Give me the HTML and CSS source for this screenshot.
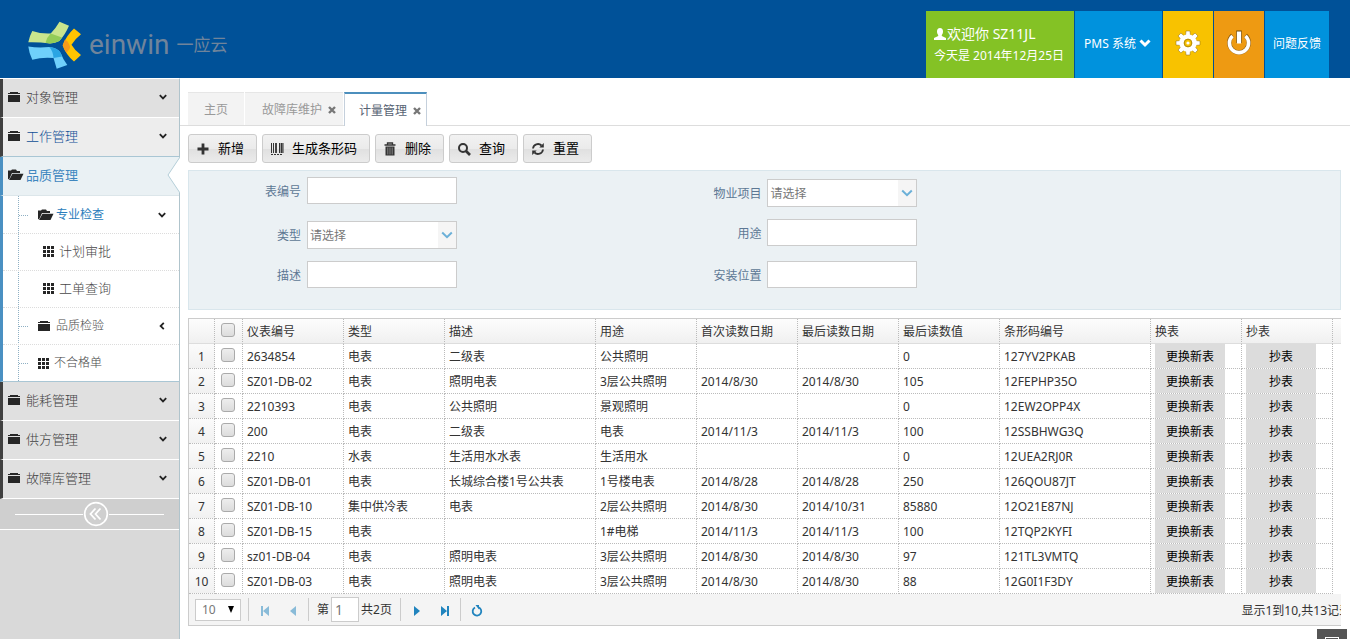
FILE: index.html
```html
<!DOCTYPE html>
<html lang="zh-CN">
<head>
<meta charset="utf-8">
<title>计量管理</title>
<link rel="stylesheet" href="styles.css">
</head>
<body>
<svg class="defs" width="0" height="0" aria-hidden="true">
  <symbol id="folder" viewBox="0 0 14 12"><path d="M0 3V2H2V1H10V2H12V3ZM0 4H12V11H0Z"/></symbol>
  <symbol id="folder-open" viewBox="0 0 16 12"><path d="M0 10.500V1.500H3L4 .5H8L9 2H12V4H4L1.500 9.500ZM4.500 4.700H15.500L12.500 11H1Z"/></symbol>
  <symbol id="grid" viewBox="0 0 11 11"><path d="M0 0H3V3H0ZM4 0H7V3H4ZM8 0H11V3H8ZM0 4H3V7H0ZM4 4H7V7H4ZM8 4H11V7H8ZM0 8H3V11H0ZM4 8H7V11H4ZM8 8H11V11H8Z"/></symbol>
  <symbol id="down" viewBox="0 0 8 6"><path d="M.8 1.200L4 4.400L7.200 1.200" fill="none" stroke="currentColor" stroke-width="1.800"/></symbol>
  <symbol id="close" viewBox="0 0 8 8"><path d="M1 1L7 7M7 1L1 7" fill="none" stroke="currentColor" stroke-width="2.400"/></symbol>
  <symbol id="chevron" viewBox="0 0 12 8"><path d="M1.200 1.500L6 6.200L10.800 1.500" fill="none" stroke="currentColor" stroke-width="2"/></symbol>
</svg>

<header class="header">
  <a class="logo" href="#">
    <svg width="54" height="48" viewBox="0 0 54 48" aria-hidden="true">
      <path d="M4.300 10Q13 13 22.700 12.500Q28 7 31.500 .8L41 4.700Q37 14 31.300 20Q27 22 22 22.500Q11 21 .3 21.300Q1.500 15 4.300 10Z" fill="#c9e58d"/>
      <path d="M22.700 12.500L34 16.500L31.300 20Q27 22 22 22.500L17.500 21.700Q19 16 22.700 12.500Z" fill="#93cc58"/>
      <path d="M.3 25.500Q10 27 21.300 26Q30 27 32.700 32Q35 38.500 39.300 44L28.700 47.700Q27 42 25.500 37Q14 36 4.300 38.700Q1 32 .3 25.500Z" fill="#6fd0fb"/>
      <path d="M21.300 26Q30 27 32.700 32L34 35.500L25.500 37Q25 30 21.300 26Z" fill="#2aa5e3"/>
      <path d="M46 7.500L53 13.300Q47 18 43.500 23.800Q47 30 53 34L46 40.500Q38 34 34.700 24.300Q38 15 46 7.500Z" fill="#ffc400"/>
      <path d="M37 18.500Q42 22 42 27L38.500 32Q35.500 28 34.700 24.300Z" fill="#f59a1c"/>
    </svg>
    <span class="logo-name">einwin</span><span class="logo-sub">一应云</span>
  </a>
  <div class="tiles">
    <div class="tile tile-user">
      <div class="hello"><svg width="12" height="12" viewBox="0 0 12 12" aria-hidden="true"><path d="M6 0C8 0 9 1.500 9 3.500C9 5 8.500 6 7.800 7V8L12 10V12H0V10L4.200 8V7C3.500 6 3 5 3 3.500C3 1.500 4 0 6 0Z" fill="#fff"/></svg>欢迎你 SZ11JL</div>
      <div>今天是 2014年12月25日</div>
    </div>
    <button class="tile tile-blue tile-pms" type="button">PMS 系统 <svg width="12" height="9" viewBox="0 0 12 9" aria-hidden="true"><path d="M1.500 1.500L6 6L10.500 1.500" fill="none" stroke="#fff" stroke-width="3"/></svg></button>
    <button class="tile tile-gear" type="button" aria-label="设置">
      <svg width="26" height="26" viewBox="-13 -13 26 26" aria-hidden="true">
        <g fill="#fff" stroke="#8a6a10" stroke-width=".5"><path id="tooth" d="M-2.600-6L-2-12H2L2.600-6ZM-2.600 6L-2 12H2L2.600 6Z"/><use href="#tooth" transform="rotate(45)"/><use href="#tooth" transform="rotate(90)"/><use href="#tooth" transform="rotate(135)"/></g>
        <circle r="6.500" fill="none" stroke="#fff" stroke-width="4.500"/><circle r="3.800" fill="#f8c200" stroke="#b08a10" stroke-width="1"/><circle r="1.600" fill="#fff"/>
      </svg>
    </button>
    <button class="tile tile-power" type="button" aria-label="退出">
      <svg width="26" height="26" viewBox="-13 -13 26 26" aria-hidden="true"><g fill="none"><path d="M-6.500-7.500A9.700 9.700 0 1 0 6.500-7.500" stroke="#8a5a10" stroke-width="4.400"/><path d="M-6.500-7A9.600 9.600 0 1 0 6.500-7" stroke="#fff" stroke-width="3.600"/><path d="M0-12.500V0" stroke="#6b4a10" stroke-width="5.400"/><path d="M0-11.500V.5" stroke="#fff" stroke-width="4.200"/></g></svg>
    </button>
    <a class="tile tile-blue tile-feedback" href="#">问题反馈</a>
  </div>
</header>

<div class="body">
  <nav class="sidebar">
    <a class="item" href="#"><svg class="ic-folder"><use href="#folder"/></svg>对象管理<svg class="arrow"><use href="#down"/></svg></a>
    <a class="item item-hover" href="#"><svg class="ic-folder"><use href="#folder"/></svg>工作管理<svg class="arrow"><use href="#down"/></svg></a>
    <a class="item item-active" href="#"><svg class="ic-open"><use href="#folder-open"/></svg>品质管理
      <svg class="notch" width="13" height="36" viewBox="0 0 13 36"><path d="M13 0L1 18L13 36" fill="#fff" stroke="#b4ced8"/></svg></a>
    <div class="submenu">
      <a class="sub sub-open branch" href="#"><svg class="ic-open"><use href="#folder-open"/></svg>专业检查<svg class="arrow"><use href="#down"/></svg></a>
      <a class="sub leaf" href="#"><svg class="ic-grid"><use href="#grid"/></svg>计划审批</a>
      <a class="sub leaf" href="#"><svg class="ic-grid"><use href="#grid"/></svg>工单查询</a>
      <a class="sub branch" href="#"><svg class="ic-folder"><use href="#folder"/></svg>品质检验<svg class="arrow arrow-left"><use href="#down"/></svg></a>
      <a class="sub branch" href="#"><svg class="ic-grid"><use href="#grid"/></svg>不合格单</a>
    </div>
    <a class="item" href="#"><svg class="ic-folder"><use href="#folder"/></svg>能耗管理<svg class="arrow"><use href="#down"/></svg></a>
    <a class="item" href="#"><svg class="ic-folder"><use href="#folder"/></svg>供方管理<svg class="arrow"><use href="#down"/></svg></a>
    <a class="item" href="#"><svg class="ic-folder"><use href="#folder"/></svg>故障库管理<svg class="arrow"><use href="#down"/></svg></a>
    <div class="collapse">
      <button type="button" aria-label="收起"><svg width="26" height="26" viewBox="0 0 26 26"><circle cx="13" cy="13" r="11.300" fill="none" stroke="#fff" stroke-width="1.700"/><path d="M12.500 7.500L7.500 13L12.500 18.500M17.500 7.500L12.500 13L17.500 18.500" fill="none" stroke="#fff" stroke-width="1.800"/></svg></button>
    </div>
  </nav>

  <main class="main">
    <div class="tabs">
      <a class="tab" href="#">主页</a>
      <a class="tab" href="#">故障库维护<svg class="x"><use href="#close"/></svg></a>
      <a class="tab tab-active" href="#">计量管理<svg class="x"><use href="#close"/></svg></a>
    </div>

    <div class="content">
      <div class="toolbar">
        <button type="button"><svg width="14" height="14" viewBox="0 0 14 14"><path d="M7 1.500V12.500M1.500 7H12.500" stroke="#333" stroke-width="2.800"/></svg>新增</button>
        <button type="button"><svg width="14" height="14" viewBox="0 0 14 14"><path d="M1.500 1V11M3.500 1V11M9.500 1V11M13 1V11" stroke="#333" stroke-width="1"/><path d="M6 1V11M11.500 1V11" stroke="#333" stroke-width="1.800"/><path d="M1 12.500H13" stroke="#333" stroke-dasharray="2 1"/></svg>生成条形码</button>
        <button type="button"><svg width="14" height="14" viewBox="0 0 14 14"><path d="M4.500 2.500V1H9.500V2.500M1.500 3H12.500" fill="none" stroke="#333" stroke-width="1.300"/><path d="M2.500 4.500H11.500V13.500H2.500Z" fill="#333"/><path d="M4.800 5.500V12.500M7 5.500V12.500M9.200 5.500V12.500" stroke="#999" stroke-width=".8"/></svg>删除</button>
        <button type="button"><svg width="14" height="14" viewBox="0 0 14 14"><circle cx="6" cy="6" r="4" fill="none" stroke="#333" stroke-width="2"/><path d="M9 9L13 13" stroke="#333" stroke-width="2.600"/></svg>查询</button>
        <button type="button"><svg width="14" height="14" viewBox="0 0 14 14"><path d="M2 6.500A5 5 0 0 1 10.500 3.500M12 7.500A5 5 0 0 1 3.500 10.500" fill="none" stroke="#333" stroke-width="1.800"/><path d="M12.800 1V5.500H8.300ZM1.200 13V8.500H5.700Z" fill="#333"/></svg>重置</button>
      </div>

      <form class="filters">
        <div class="filter-col">
          <div class="field"><label for="f1">表编号</label><input id="f1" type="text"></div>
          <div class="field"><label for="f2">类型</label><span class="combo"><select id="f2"><option>请选择</option></select><svg><use href="#chevron"/></svg></span></div>
          <div class="field"><label for="f3">描述</label><input id="f3" type="text"></div>
        </div>
        <div class="filter-col filter-col-right">
          <div class="field"><label for="f4">物业项目</label><span class="combo"><select id="f4"><option>请选择</option></select><svg><use href="#chevron"/></svg></span></div>
          <div class="field"><label for="f5">用途</label><input id="f5" type="text"></div>
          <div class="field"><label for="f6">安装位置</label><input id="f6" type="text"></div>
        </div>
      </form>

      <div class="grid">
        <table>
          <colgroup><col class="c-no"><col class="c-check"><col class="c-m"><col class="c-m"><col class="c-l"><col class="c-m"><col class="c-m"><col class="c-m"><col class="c-m"><col class="c-l"><col class="c-act"><col class="c-act"><col></colgroup>
          <thead><tr><th></th><th><input type="checkbox" aria-label="全选"></th><th>仪表编号</th><th>类型</th><th>描述</th><th>用途</th><th>首次读数日期</th><th>最后读数日期</th><th>最后读数值</th><th>条形码编号</th><th>换表</th><th>抄表</th><th></th></tr></thead>
          <tbody>
            <tr><td>1</td><td><input type="checkbox" aria-label="选择 1"></td><td>2634854</td><td>电表</td><td>二级表</td><td>公共照明</td><td></td><td></td><td>0</td><td>127YV2PKAB</td><td><button type="button">更换新表</button></td><td><button type="button">抄表</button></td><td></td></tr>
            <tr><td>2</td><td><input type="checkbox" aria-label="选择 2"></td><td>SZ01-DB-02</td><td>电表</td><td>照明电表</td><td>3层公共照明</td><td>2014/8/30</td><td>2014/8/30</td><td>105</td><td>12FEPHP35O</td><td><button type="button">更换新表</button></td><td><button type="button">抄表</button></td><td></td></tr>
            <tr><td>3</td><td><input type="checkbox" aria-label="选择 3"></td><td>2210393</td><td>电表</td><td>公共照明</td><td>景观照明</td><td></td><td></td><td>0</td><td>12EW2OPP4X</td><td><button type="button">更换新表</button></td><td><button type="button">抄表</button></td><td></td></tr>
            <tr><td>4</td><td><input type="checkbox" aria-label="选择 4"></td><td>200</td><td>电表</td><td>二级表</td><td>电表</td><td>2014/11/3</td><td>2014/11/3</td><td>100</td><td>12SSBHWG3Q</td><td><button type="button">更换新表</button></td><td><button type="button">抄表</button></td><td></td></tr>
            <tr><td>5</td><td><input type="checkbox" aria-label="选择 5"></td><td>2210</td><td>水表</td><td>生活用水水表</td><td>生活用水</td><td></td><td></td><td>0</td><td>12UEA2RJ0R</td><td><button type="button">更换新表</button></td><td><button type="button">抄表</button></td><td></td></tr>
            <tr><td>6</td><td><input type="checkbox" aria-label="选择 6"></td><td>SZ01-DB-01</td><td>电表</td><td>长城综合楼1号公共表</td><td>1号楼电表</td><td>2014/8/28</td><td>2014/8/28</td><td>250</td><td>126QOU87JT</td><td><button type="button">更换新表</button></td><td><button type="button">抄表</button></td><td></td></tr>
            <tr><td>7</td><td><input type="checkbox" aria-label="选择 7"></td><td>SZ01-DB-10</td><td>集中供冷表</td><td>电表</td><td>2层公共照明</td><td>2014/8/30</td><td>2014/10/31</td><td>85880</td><td>12O21E87NJ</td><td><button type="button">更换新表</button></td><td><button type="button">抄表</button></td><td></td></tr>
            <tr><td>8</td><td><input type="checkbox" aria-label="选择 8"></td><td>SZ01-DB-15</td><td>电表</td><td></td><td>1#电梯</td><td>2014/11/3</td><td>2014/11/3</td><td>100</td><td>12TQP2KYFI</td><td><button type="button">更换新表</button></td><td><button type="button">抄表</button></td><td></td></tr>
            <tr><td>9</td><td><input type="checkbox" aria-label="选择 9"></td><td>sz01-DB-04</td><td>电表</td><td>照明电表</td><td>3层公共照明</td><td>2014/8/30</td><td>2014/8/30</td><td>97</td><td>121TL3VMTQ</td><td><button type="button">更换新表</button></td><td><button type="button">抄表</button></td><td></td></tr>
            <tr><td>10</td><td><input type="checkbox" aria-label="选择 10"></td><td>SZ01-DB-03</td><td>电表</td><td>照明电表</td><td>3层公共照明</td><td>2014/8/30</td><td>2014/8/30</td><td>88</td><td>12G0I1F3DY</td><td><button type="button">更换新表</button></td><td><button type="button">抄表</button></td><td></td></tr>
          </tbody>
        </table>
        <div class="pager">
          <span class="page-size"><select aria-label="每页条数"><option>10</option></select><svg width="8" height="8" viewBox="0 0 8 8"><path d="M1 0H7L4 7Z"/></svg></span>
          <i class="sep"></i>
          <button class="off" type="button" aria-label="首页"><svg width="10" height="10" viewBox="0 0 10 10"><path d="M1 0H3V10H1ZM9 0V10L3 5Z"/></svg></button>
          <button class="off" type="button" aria-label="上一页"><svg width="10" height="10" viewBox="0 0 10 10"><path d="M8 0V10L2 5Z"/></svg></button>
          <i class="sep"></i>
          <label class="page-no">第<input type="text" value="1">共2页</label>
          <i class="sep"></i>
          <button type="button" aria-label="下一页"><svg width="10" height="10" viewBox="0 0 10 10"><path d="M2 0V10L8 5Z"/></svg></button>
          <button type="button" aria-label="末页"><svg width="10" height="10" viewBox="0 0 10 10"><path d="M7 0H9V10H7ZM1 0V10L7 5Z"/></svg></button>
          <i class="sep"></i>
          <button type="button" aria-label="刷新"><svg width="12" height="12" viewBox="0 0 12 12"><path d="M7.500 2.300A4.300 4.300 0 1 1 4 2.500" fill="none" stroke="#2184be" stroke-width="1.800"/><path d="M4.500 0H8V4.500Z"/></svg></button>
          <span class="info">显示1到10,共13记录</span>
        </div>
      </div>
    </div>
  </main>
</div>
<button class="corner" type="button" aria-label="窗口"><svg width="14" height="10" viewBox="0 0 14 10"><rect x=".5" y=".5" width="13" height="9" fill="none" stroke="#fff"/></svg></button>
</body>
</html>
```
FILE: styles.css
```css
* { box-sizing: border-box; }
body {
  margin: 0;
  min-height: 100vh;
  display: flex;
  flex-direction: column;
  overflow: hidden;
  background: #fff;
  color: #333;
  font: 12px/18px "Noto Sans", "Noto Sans CJK SC", sans-serif;
}
a { color: inherit; text-decoration: none; }
button, input, select { font: inherit; color: inherit; margin: 0; border-radius: 0; }
button { cursor: pointer; }
.defs { position: absolute; }

/* header */
.header {
  display: flex;
  justify-content: space-between;
  align-items: flex-end;
  height: 78px;
  padding: 0 21px 0 28px;
  background: #005198;
}
.logo { display: flex; align-items: center; align-self: center; height: 68px; padding-top: 11px; color: #70849b; }
.logo-name { margin: 0 7px 0 7px; font: 28px/32px Roboto, sans-serif; }
.logo-sub { font-size: 17px; line-height: 24px; }
.tiles { display: flex; gap: 1px; height: 67px; color: #fff; }
.tile { display: flex; align-items: center; justify-content: center; padding: 0; border: 0; color: #fff; }
.tile-user { flex-direction: column; align-items: flex-start; width: 148px; padding: 0 8px; gap: 3px; background: #84c225; white-space: nowrap; }
.hello { display: flex; align-items: center; gap: 1px; font-size: 14px; line-height: 20px; }
.tile-blue { padding-bottom: 2px; background: #0092dd; }
.tile-pms { width: 87px; gap: 3px; padding-right: 2px; }
.tile-gear { width: 50px; background: #f8c200; }
.tile-power { width: 50px; background: #ee9a12; }
.tile-feedback { width: 64px; }
.tile-gear svg, .tile-power svg { margin-bottom: 4px; }

/* sidebar */
.body { display: flex; flex: 1; }
.sidebar { flex: 0 0 180px; border-top: 1px solid #fff; border-right: 1px solid #b0c4cc; background: #d9d9d9; color: #404040; }
.item {
  position: relative;
  display: flex;
  align-items: center;
  height: 39px;
  padding: 0 12px 2px 5px;
  border-left: 3px solid #404040;
  border-bottom: 1px solid #fff;
  background: #e0e0e0;
  font-size: 13px;
  font-weight: 300;
}
.item-hover { background: #ededed; color: #0f4f96; border-bottom-color: #a9c6d4; }
.item-active { background: #eaf1f4; color: #3f87bf; border-left-color: #4a90c2; border-bottom-color: #dce6ea; font-weight: 400; }
.ic-folder { width: 14px; height: 12px; margin-right: 4px; fill: #262626; }
.ic-open { width: 16px; height: 12px; margin-right: 2px; fill: #262626; }
.ic-grid { width: 11px; height: 11px; margin-right: 5px; fill: #262626; }
.arrow { width: 8px; height: 6px; margin-left: auto; color: #222; }
.arrow-left { transform: rotate(90deg); }
.notch { position: absolute; right: -1px; top: 0; }
.submenu { position: relative; padding-top: 1px; border-left: 3px solid #4a90c2; border-bottom: 1px solid #a9c6d4; background: #fff; color: #484848; }
.submenu::before { content: ""; position: absolute; left: 15px; top: 0; bottom: 0; border-left: 1px dotted #8fb0c4; }
.sub { position: relative; display: flex; align-items: center; height: 37px; padding: 0 13px 0 35px; border-bottom: 1px dotted #dcdcdc; font-weight: 300; }
.sub:last-child { height: 36px; border-bottom: 0; }
.sub.leaf { padding-left: 40px; padding-bottom: 2px; font-size: 13px; }
.sub-open { color: #2b7dbc; font-weight: 400; }
.branch::before { content: ""; position: absolute; left: 16px; top: 18px; width: 9px; border-top: 1px dotted #8fb0c4; }
.collapse { display: flex; justify-content: center; align-items: center; height: 31px; padding: 0 15px; border-bottom: 1px solid #fff; background: #cfcfcf; }
.collapse::before, .collapse::after { content: ""; border-top: 1px solid #fff; }
.collapse::before { flex: 5; }
.collapse::after { flex: 4; }
.collapse button { display: flex; padding: 0; border: 0; background: none; }

/* tabs */
.main { flex: 1; min-width: 0; padding-top: 14px; }
.tabs { display: flex; gap: 1px; height: 34px; padding-left: 8px; border-bottom: 1px solid #ddd; color: #999; }
.tab { display: flex; align-items: center; gap: 6px; padding: 2px 7px 0 17px; border-top: 1px solid #e6e6e6; background: #f3f3f3; }
.tab:first-child { padding: 2px 16px 0; }
.tab-active { height: 34px; padding: 1px 5px 0 14px; border: 1px solid #c5d0dc; border-top: 2px solid #4c8fbd; border-bottom: 0; background: #fff; color: #576373; }
.x { width: 8px; height: 8px; color: #777; }

/* toolbar */
.content { padding: 8px 9px 0 8px; }
.toolbar { display: flex; gap: 5px; margin-bottom: 7px; }
.toolbar button { display: flex; align-items: center; gap: 8px; height: 29px; padding: 0 12px 2px 7px; border: 1px solid #ccc; border-radius: 3px; background: linear-gradient(#f2f2f2, #ebebeb 50%, #e0e0e0 52%, #ebebeb); color: #000; font-size: 13px; }
.toolbar svg { margin-top: 2px; }

/* filters */
.filters { display: flex; height: 140px; margin-bottom: 8px; border: 1px solid #d9e6ec; background: #ebf1f4; color: #5d7894; }
.filter-col { flex: 0 0 40%; padding-top: 6px; }
.filter-col-right { padding-top: 8px; }
.field { display: flex; align-items: center; gap: 6px; margin-bottom: 12px; }
.filter-col:first-child .field:first-child { margin-bottom: 17px; }
.filter-col-right .field:nth-child(2) { margin-bottom: 15px; }
.field label { width: 112px; padding-top: 2px; text-align: right; }
.field input, .field select { width: 150px; height: 27px; padding: 0 2px; border: 1px solid #ccc; background: #fff; color: #777; outline: 0; appearance: none; }
.combo { position: relative; display: flex; }
.field select { height: 28px; padding-top: 2px; }
.combo svg { position: absolute; right: 1px; top: 1px; width: 18px; height: 26px; padding: 9px 3px; background: #f5f5f5; color: #6bb0d8; pointer-events: none; }

/* data grid */
.grid { overflow: hidden; border: solid #ccc; border-width: 1px 0 1px 1px; }
table { width: 100%; table-layout: fixed; border-collapse: separate; border-spacing: 0; }
.c-no { width: 26px; }
.c-check { width: 28px; }
.c-m { width: 101px; }
.c-l { width: 151px; }
.c-act { width: 91px; }
th, td { height: 25px; padding: 2px 4px 0; border-right: 1px dotted #bbb; border-bottom: 1px dotted #bbb; font-weight: 400; text-align: left; white-space: nowrap; line-height: 18px; }
th { border-bottom: 1px solid #ddd; background: linear-gradient(#fdfdfd, #f0f0f0); }
th:last-child, td:last-child { border-right: 0; }
td:last-child { border-bottom: 0; }
td:first-child { padding: 2px 0 0; background: linear-gradient(#fbfbfb, #f1f1f1); text-align: center; }
th:nth-child(2), td:nth-child(2) { padding: 0 1px 0 0; text-align: center; }
td:nth-child(11), td:nth-child(12) { padding: 0 4px; }
td button { display: block; width: 70px; height: 24px; padding: 2px 0 0; border: 0; background: #dcdcdc; color: #000; }
input[type="checkbox"] { display: block; width: 14px; height: 14px; margin: 0 auto 2px; border: 1px solid #aaa; border-radius: 3px; background: linear-gradient(#eee, #dcdcdc); appearance: none; }

/* pager */
.pager { display: flex; align-items: center; height: 31px; padding-left: 6px; background: #f4f4f4; }
.page-size { position: relative; display: flex; }
.page-size select { width: 46px; height: 22px; padding: 0 6px; border: 1px solid #ccc; background: #fff; color: #777; appearance: none; }
.page-size svg { position: absolute; right: 6px; top: 7px; pointer-events: none; }
.sep { width: 1px; height: 23px; margin: 0 7px; background: #ccc; }
.pager button { display: flex; align-items: center; justify-content: center; width: 20px; height: 20px; margin: 2px 4px 0; padding: 0; border: 0; background: none; fill: #2184be; }
.pager .off { opacity: .5; }
.pager .sep + button { margin-left: -1px; }
.pager button:nth-of-type(2), .pager button:nth-of-type(4) { margin-right: -2px; }
.page-no { display: flex; align-items: center; gap: 2px; padding: 0 1px; }
.page-no input { width: 28px; height: 25px; padding: 0 3px; border: 1px solid #ccc; background: #fff; color: #777; font-size: 14px; }
.info { margin: 2px -10px 0 auto; white-space: nowrap; }

/* page corner control */
.corner { position: fixed; right: 3px; bottom: 0; width: 30px; height: 10px; padding: 8px 8px 0; border: 0; background: #555; overflow: hidden; }
.corner svg { display: block; }
```
